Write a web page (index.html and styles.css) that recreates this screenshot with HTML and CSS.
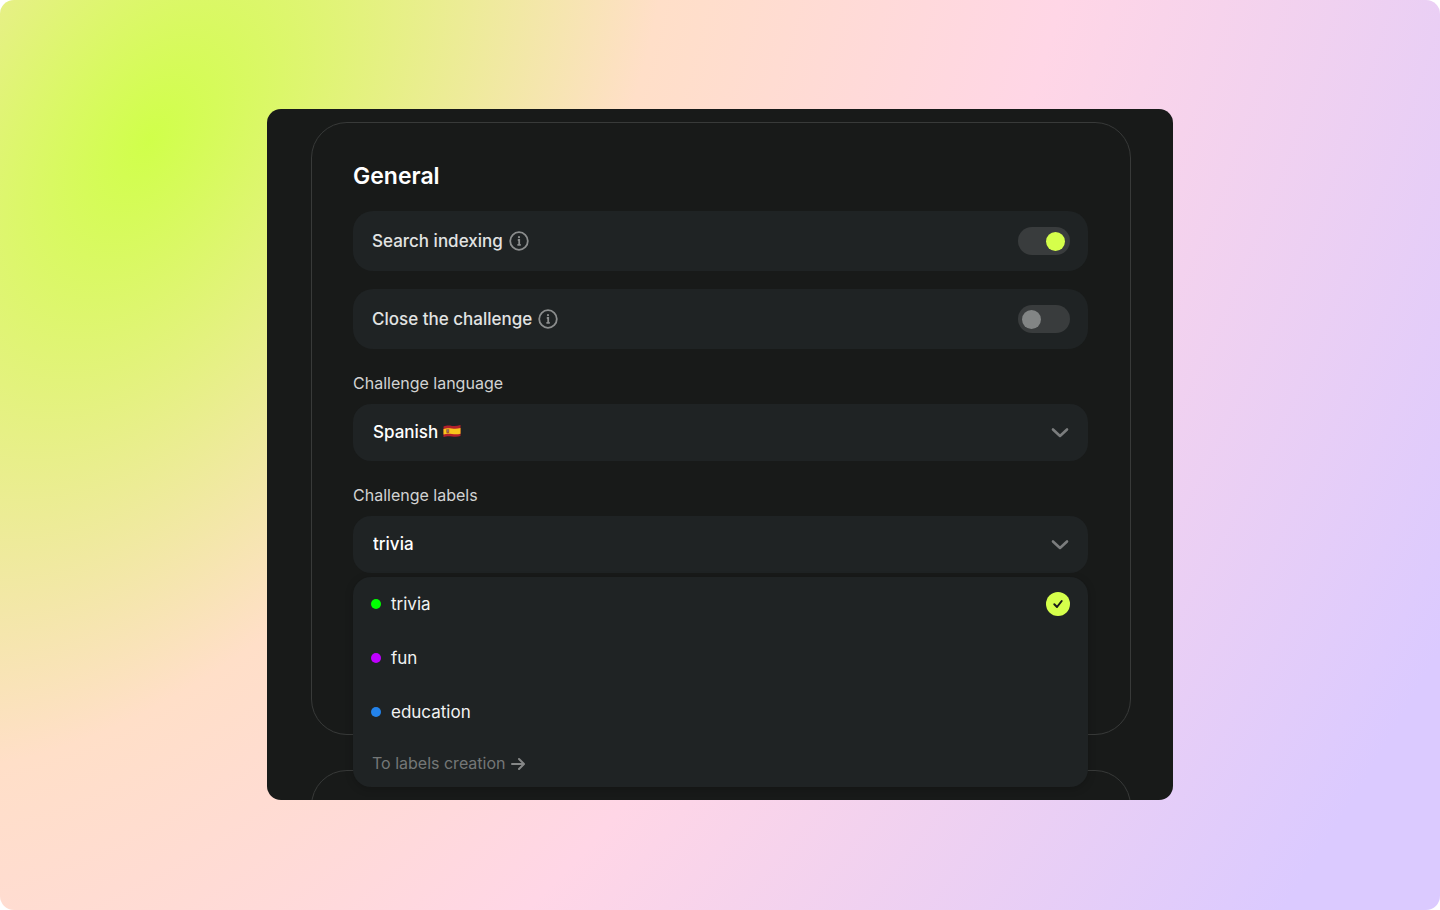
FILE: index.html
```html
<!DOCTYPE html>
<html lang="en">
<head>
  <meta charset="UTF-8">
  <meta name="viewport" content="width=device-width, initial-scale=1">
  <title>Challenge settings</title>
  <link rel="stylesheet" href="styles.css">
</head>
<body>

  <div class="page">
    <svg class="backdrop" viewBox="0 0 1440 910" preserveAspectRatio="none" aria-hidden="true">
      <defs>
        <radialGradient id="glow" gradientUnits="userSpaceOnUse" cx="0" cy="0" r="1"
          gradientTransform="translate(150 140) rotate(33) scale(1370 2260)">
          <stop offset="0" stop-color="#d0ff4a"/>
          <stop offset="0.31" stop-color="#ffdfc8"/>
          <stop offset="0.57" stop-color="#ffd6e6"/>
          <stop offset="1" stop-color="#dbcaff"/>
        </radialGradient>
      </defs>
      <rect width="1440" height="910" fill="url(#glow)"/>
    </svg>

    <main class="panel">
      <section class="card">
        <h2>General</h2>

        <div class="row">
          <label for="indexing">Search indexing</label>
          <button class="info" type="button" aria-label="About search indexing">
            <svg viewBox="0 0 20 20"><circle cx="10" cy="10" r="8.8"/><path d="M8.8 9h1.4v4.6M8.4 13.8h3.4"/><circle class="dot" cx="10" cy="6.2" r="1.1"/></svg>
          </button>
          <input class="toggle" type="checkbox" id="indexing" checked>
        </div>

        <div class="row">
          <label for="close">Close the challenge</label>
          <button class="info" type="button" aria-label="About closing the challenge">
            <svg viewBox="0 0 20 20"><circle cx="10" cy="10" r="8.8"/><path d="M8.8 9h1.4v4.6M8.4 13.8h3.4"/><circle class="dot" cx="10" cy="6.2" r="1.1"/></svg>
          </button>
          <input class="toggle" type="checkbox" id="close">
        </div>

        <label class="caption" for="language">Challenge language</label>
        <div class="field">
          <select id="language">
            <option>Spanish</option>
          </select>
          <svg class="flag" viewBox="0 0 18 14" aria-hidden="true">
            <path fill="#b3202b" d="M.5 2.600C4 1.200 6 1.600 9 1.900S14.500 2 17.500 1V12c-3 1-5.500 .8-8.500 .5S4 11.900 .5 13z"/>
            <path fill="#f8c51c" d="M.5 5C4 3.800 6 4.200 9 4.500s5.500 .3 8.500-.6v5.800c-3 .9-5.500 .7-8.500 .4S4 9.400 .5 10.600z"/>
            <path fill="#a8572c" d="M3.300 5.300h2.900v3c0 1.300-2.900 1.300-2.900 0z"/>
            <path fill="#8d7a80" d="M4.200 5.500h1.200v2.200H4.200z"/>
          </svg>
          <svg class="chevron" viewBox="0 0 18 12" aria-hidden="true"><path d="M2 2.500l7 6.500 7-6.500"/></svg>
        </div>

        <label class="caption" for="labels">Challenge labels</label>
        <div class="field">
          <select id="labels">
            <option>trivia</option>
            <option>fun</option>
            <option>education</option>
          </select>
          <svg class="chevron" viewBox="0 0 18 12" aria-hidden="true"><path d="M2 2.500l7 6.500 7-6.500"/></svg>

          <div class="menu">
            <button class="item" type="button">
              <span class="bullet green"></span>trivia
              <svg class="check" viewBox="0 0 24 24" aria-hidden="true"><circle cx="12" cy="12" r="12"/><path d="M8.300 12.300l2.700 2.700 4.700-6"/></svg>
            </button>
            <button class="item" type="button"><span class="bullet purple"></span>fun</button>
            <button class="item" type="button"><span class="bullet blue"></span>education</button>
            <a class="create" href="#labels">To labels creation
              <svg viewBox="0 0 14 14" aria-hidden="true"><path d="M1 8h11.500M8 3l5 5-5 5"/></svg>
            </a>
          </div>
        </div>
      </section>

      <section class="card"></section>
    </main>
  </div>

</body>
</html>
```
FILE: styles.css
```css
* { margin:0; padding:0; box-sizing:border-box; }
body { font-family:Inter, 'Liberation Sans', sans-serif; background:#fff; color:#e2e3e3; }
button, select { font:inherit; color:inherit; background:none; border:none; cursor:pointer; }

.page {
  position:relative; height:100vh; padding:109px 16px 110px;
  display:flex; justify-content:center;
  border-radius:14px; overflow:hidden;
}
.backdrop { position:absolute; inset:0; width:100%; height:100%; }
.panel {
  position:relative; width:100%; max-width:906px;
  padding:13px 42px 0 44px;
  background:#181a19; border-radius:14px; overflow:hidden;
}
.card {
  padding:38px 42px 161px 41px; margin-bottom:35px;
  border:1px solid #383a39; border-radius:36px;
}
h2 { margin-bottom:20px; font-size:23px; line-height:30px; font-weight:600; color:#fff; }

.row {
  display:flex; align-items:center; height:60px; padding:0 18px 0 19px;
  margin-bottom:18px; border-radius:20px; background:#1f2324;
  font-size:17px; font-weight:500;
}
.info { width:20px; height:20px; margin-left:6px; }
.info svg { display:block; fill:none; stroke:#8b8d8d; stroke-width:1.8; }
.info .dot { fill:#8b8d8d; stroke:none; }

.toggle {
  appearance:none; display:flex; align-items:center;
  width:52px; height:28px; padding:0 5px 0 4px; margin-left:auto;
  border-radius:14px; background:#393c3d; cursor:pointer;
}
.toggle::before { content:""; width:19px; height:19px; border-radius:50%; background:#828585; }
.toggle:checked { justify-content:flex-end; }
.toggle:checked::before { background:#d5ff4b; }

.caption {
  display:block; margin:24px 0 11px;
  font-size:16px; line-height:20px; color:#d2d3d3;
}
.field { position:relative; }
.field select {
  appearance:none; display:block; width:100%; height:57px; padding:0 20px 2px;
  border-radius:18px; background:#1f2324; color:#fff;
  font-size:17px; font-weight:500;
}
.flag { position:absolute; left:90px; top:20px; width:18px; height:14px; }
.chevron {
  position:absolute; right:19px; top:23px; width:18px; height:12px;
  fill:none; stroke:#7b7d7e; stroke-width:2.6; stroke-linecap:round; stroke-linejoin:round;
  pointer-events:none;
}

.menu {
  position:absolute; top:100%; left:0; right:0; margin-top:4px;
  border-radius:18px; background:#1f2324;
  box-shadow:0 2px 8px rgba(0,0,0,0.2);
}
.item {
  display:flex; align-items:center; width:100%; height:54px; padding:0 18px;
  font-size:17px; text-align:left; color:#f1f2f2;
}
.bullet { width:10px; height:10px; margin-right:10px; border-radius:50%; }
.green { background:#00ff00; }
.purple { background:#bf00ff; }
.blue { background:#2383eb; }
.check { width:24px; height:24px; margin-left:auto; fill:#d5ff4b; }
.check path { fill:none; stroke:#181a19; stroke-width:2; stroke-linecap:round; stroke-linejoin:round; }
.create {
  display:flex; align-items:center; gap:5px; height:48px; padding:0 19px;
  font-size:16px; color:#747777; text-decoration:none;
}
.create svg { width:14px; height:14px; fill:none; stroke:#858787; stroke-width:2; stroke-linecap:round; stroke-linejoin:round; }
```
